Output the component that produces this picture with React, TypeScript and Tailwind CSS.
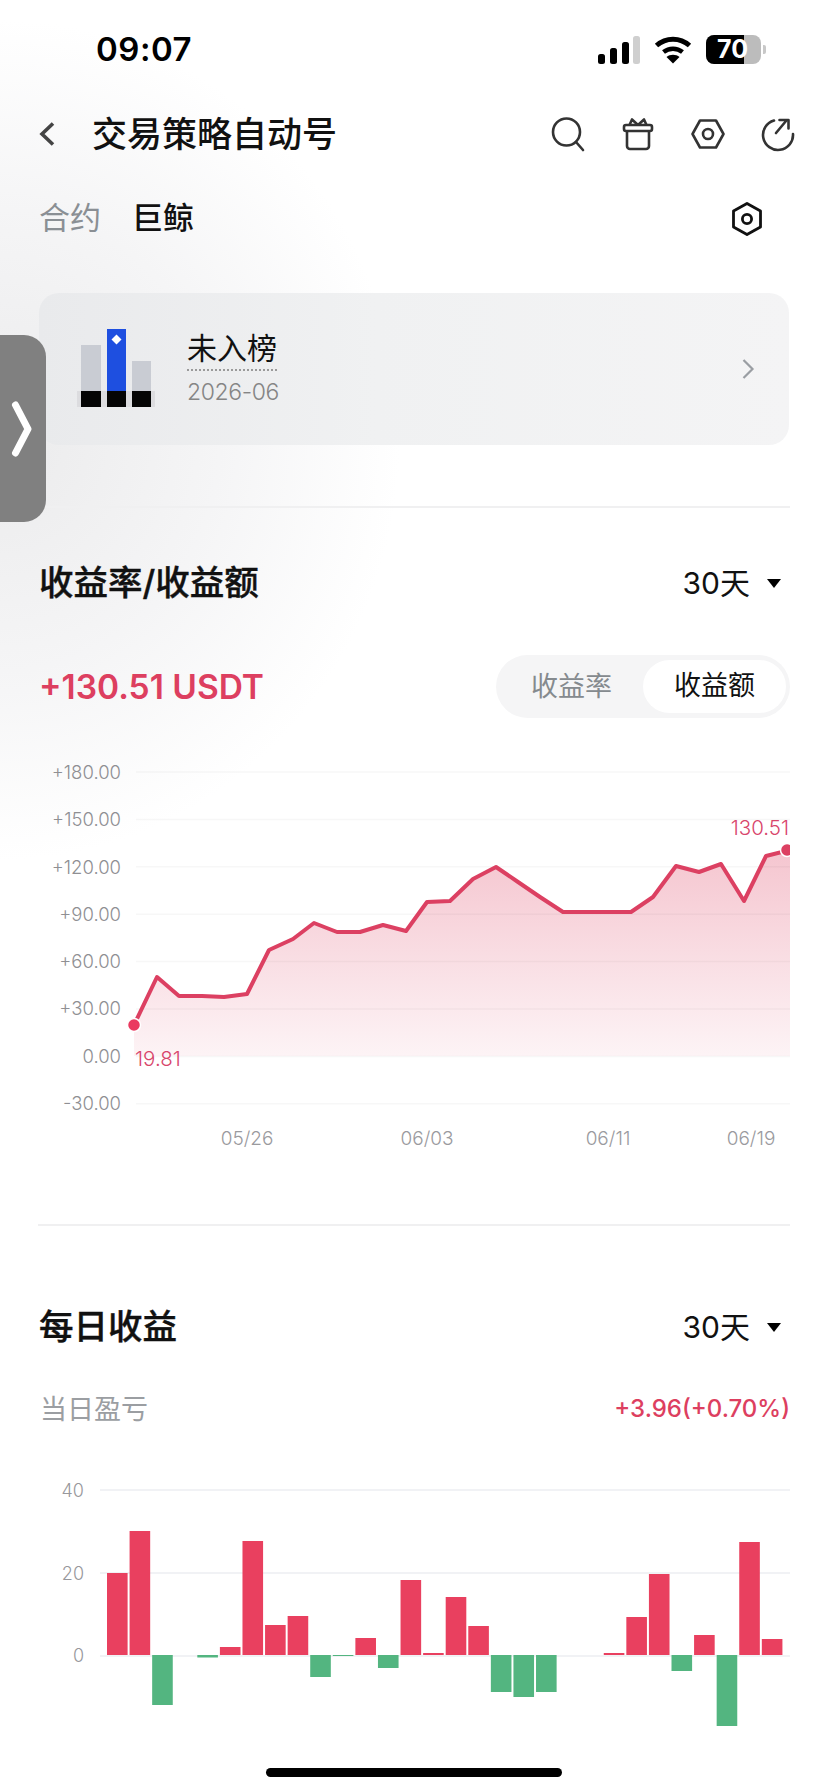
const FONT = "font-['Inter','Noto_Sans_CJK_SC',sans-serif]";

const LINE: [number, number][] = [
  [134, 1025], [157, 977], [179, 996], [202, 996], [224, 997], [247, 994], [269, 950], [293, 939],
  [314, 923], [337, 932], [360, 932], [383, 925], [406, 931], [427, 902], [450, 901], [473, 879],
  [496, 867], [518, 882], [540, 897], [563, 912], [586, 912], [608, 912], [631, 912], [653, 897],
  [676, 866], [699, 872], [721, 864], [744, 901], [766, 856], [790, 850],
];

const BARS = [
  82, 124, -50, 0, -2.5, 8, 114, 30, 39, -22, -1, 17, -13, 75, 2, 58, 29, -37, -42, -37, 0, 0, 2, 38, 81, -16, 20, -71, 113,
  16,
];

const Y_LABELS = ['+180.00', '+150.00', '+120.00', '+90.00', '+60.00', '+30.00', '0.00', '-30.00'];
const GRID_Y = [772, 819.4, 866.8, 914.2, 961.6, 1009, 1056.4, 1103.8];

function StatusBar() {
  return (
    <div className="flex h-[98px] items-center pl-[96px] pr-[62px] pt-[1px]">
      <span className="text-[33px] font-semibold tracking-[0.5px] text-black">09:07</span>
      <div className="ml-auto flex items-center">
        <svg width="44" height="28" viewBox="0 0 44 28">
          <rect x="1" y="18" width="7" height="10" rx="2.5" fill="#000" />
          <rect x="13" y="12" width="7" height="16" rx="2.5" fill="#000" />
          <rect x="25" y="6" width="7" height="22" rx="2.5" fill="#000" />
          <rect x="36" y="0" width="7" height="28" rx="2.5" fill="#cfcfcf" />
        </svg>
        <svg className="ml-[13px]" width="38" height="28" viewBox="0 0 38 28">
          <path d="M2.5 9.5 C 12 1 26 1 35.5 9.5" fill="none" stroke="#000" strokeWidth="5" />
          <path d="M9.5 16 C 15 11.5 23 11.5 28.5 16" fill="none" stroke="#000" strokeWidth="4.5" />
          <path d="M19 27.5 L12.5 21 C 16 18 22 18 25.5 21 Z" fill="#000" />
        </svg>
        <div className="relative ml-[14px] flex h-[29px] w-[55px] overflow-hidden rounded-[8px] bg-[#bcbcbc]">
          <div className="h-full w-[38px] bg-black" />
          <span className="absolute left-[11px] top-0 text-[25px] font-bold leading-[29px] text-white">70</span>
        </div>
        <div className="ml-[2px] h-[9px] w-[3px] rounded-r-[2px] bg-[#c8c8c8]" />
      </div>
    </div>
  );
}

function TopBar() {
  return (
    <div className="flex h-[70px] items-center pl-[38px] pr-[32px] pt-[2px]">
      <svg width="18" height="26" viewBox="0 0 18 26">
        <path d="M15 2.5 L4 13 L15 23.5" fill="none" stroke="#444" strokeWidth="3.6" />
      </svg>
      <h1 className="ml-[36px] text-[35px] font-medium leading-none text-[#111]">交易策略自动号</h1>
      <div className="ml-auto flex items-center gap-[34px] text-[#333]">
        <svg width="36" height="36" viewBox="0 0 36 36" fill="none" stroke="currentColor" strokeWidth="2.6">
          <circle cx="16.5" cy="16" r="13.5" />
          <path d="M26 26 L33 34" strokeLinecap="round" />
        </svg>
        <svg width="36" height="36" viewBox="0 0 36 36" fill="none" stroke="currentColor" strokeWidth="2.6" strokeLinejoin="round">
          <path d="M7 14 V30 a3 3 0 0 0 3 3 H26 a3 3 0 0 0 3 -3 V14" />
          <rect x="4" y="9" width="28" height="6" rx="2" />
          <path d="M18 9 L12 3.5 L9.5 9 M18 9 L24 3.5 L26.5 9" />
        </svg>
        <svg width="36" height="36" viewBox="0 0 36 36" fill="none" stroke="currentColor" strokeWidth="2.6" strokeLinejoin="round">
          <path d="M2.5 18 L10 4.5 H26 L33.5 18 L26 31.5 H10 Z" />
          <circle cx="18" cy="18" r="5" />
        </svg>
        <svg width="36" height="36" viewBox="0 0 36 36" fill="none" stroke="currentColor" strokeWidth="2.6" strokeLinecap="round" strokeLinejoin="round">
          <path d="M14 4.5 A 15 15 0 1 0 33 18" />
          <path d="M16 17 L26 5 M19.5 4 H28.5 V12.5" />
        </svg>
      </div>
    </div>
  );
}

function RankCard() {
  return (
    <div className="mx-[39px] mt-[27px] flex h-[152px] items-center rounded-[20px] bg-[linear-gradient(90deg,#e9eaec,#f0f1f2_45%,#f4f4f5)] pl-[38px] pr-[34px]">
      <svg width="80" height="80" viewBox="0 0 80 80">
        <rect x="0" y="62" width="78" height="16" fill="#dcdcdf" />
        <rect x="4" y="16" width="20" height="46" fill="#c9ccd3" />
        <rect x="55" y="32" width="19" height="30" fill="#c9ccd3" />
        <rect x="30" y="0" width="19" height="62" fill="#1e4fe0" />
        <path d="M39.5 5.5 L44.5 10.5 L39.5 15.5 L34.5 10.5 Z" fill="#fff" />
        <rect x="4" y="62" width="20" height="16" fill="#050505" />
        <rect x="30" y="62" width="19" height="16" fill="#050505" />
        <rect x="55" y="62" width="19" height="16" fill="#050505" />
      </svg>
      <div className="ml-[30px] flex -translate-y-[1px] flex-col items-start">
        <span className="border-b-2 border-dotted border-[#9a9a9a] pb-[2px] text-[30px] leading-[38px] text-[#111]">未入榜</span>
        <span className="mt-[6px] text-[23px] font-light leading-[30px] tracking-[-0.4px] text-[#858585]">2026-06</span>
      </div>
      <svg className="ml-auto" width="14" height="22" viewBox="0 0 14 22">
        <path d="M2.5 2 L11.5 11 L2.5 20" fill="none" stroke="#9a9ea3" strokeWidth="2.2" />
      </svg>
    </div>
  );
}

function RangeSelect() {
  return (
    <div className="flex items-center">
      <span className="text-[30px] leading-none text-[#111]">30天</span>
      <span className="ml-[17px] mr-[9px] h-0 w-0 border-x-[7px] border-t-[9px] border-x-transparent border-t-black" />
    </div>
  );
}

function Divider({ className }: { className: string }) {
  return <div className={`mx-[38px] h-[2px] bg-[#f0f0f1] ${className}`} />;
}

function ProfitChart() {
  const pts = LINE.map(([x, y]) => `${x},${y}`).join(' ');
  return (
    <div>
      <div className="mt-[42px] flex h-[63px] items-center pl-[39px] pr-[38px]">
        <span className="translate-y-[1px] text-[33.5px] font-semibold leading-none text-[#dd3f60]">+130.51 USDT</span>
        <div className="ml-auto flex h-[63px] w-[294px] items-center rounded-full bg-[#f5f5f6] pl-[35px] pr-[4px]">
          <span className="text-[27px] leading-none text-[#858a8e]">收益率</span>
          <span className="ml-auto flex h-[53px] w-[143px] items-center justify-center rounded-full bg-white text-[27px] text-[#111]">
            收益额
          </span>
        </div>
      </div>

      <div className="relative mt-[42px] flex h-[355px] pl-[40px]">
        <div className="flex w-[81px] flex-col justify-between text-right text-[18.5px] font-light leading-[24px] text-[#8f8f93]">
          {Y_LABELS.map((l) => (
            <span key={l}>{l}</span>
          ))}
        </div>
        <svg className="ml-[5px]" width="664" height="355" viewBox="126 760 664 355">
          <defs>
            <linearGradient id="area" x1="0" y1="0" x2="0" y2="1">
              <stop offset="0" stopColor="#dd3f60" stopOpacity="0.3" />
              <stop offset="1" stopColor="#dd3f60" stopOpacity="0.06" />
            </linearGradient>
          </defs>
          <polygon points={`134,1056 ${pts} 790,1056`} fill="url(#area)" />
          {GRID_Y.map((y) => (
            <line key={y} x1="136" x2="790" y1={y} y2={y} stroke="#000" strokeOpacity="0.03" strokeWidth="1.5" />
          ))}
          <polyline points={pts} fill="none" stroke="#dc4062" strokeWidth="4" strokeLinejoin="round" />
          <circle cx="134" cy="1025" r="6.5" fill="#ea3a60" stroke="#fff" strokeWidth="1.5" />
          <circle cx="787" cy="850" r="6.5" fill="#dc4062" stroke="#fff" strokeWidth="1.5" />
        </svg>
        <span className="absolute left-[135px] top-[287px] text-[20.5px] font-light leading-[24px] text-[#d8456b]">19.81</span>
        <span className="absolute right-[39px] top-[56px] text-[20.5px] font-light leading-[24px] text-[#d8456b]">130.51</span>
      </div>

      <div className="ml-[197px] mt-[12px] flex h-[24px] text-[19px] font-light leading-[24px] text-[#9a9a9e]">
        <span className="w-[100px] text-center">05/26</span>
        <span className="ml-[80px] w-[100px] text-center">06/03</span>
        <span className="ml-[81px] w-[100px] text-center">06/11</span>
        <span className="ml-[43px] w-[100px] text-center">06/19</span>
      </div>
    </div>
  );
}

function DailyChart() {
  return (
    <div className="mt-[50px] flex h-[251px] pl-[40px]">
      <div className="flex h-[189px] w-[44px] flex-col justify-between text-right text-[18px] font-light leading-[24px] text-[#98989c]">
        <span>40</span>
        <span>20</span>
        <span>0</span>
      </div>
      <svg className="ml-[16px]" width="690" height="251" viewBox="100 1479 690 251">
        {[1490, 1573, 1656].map((y) => (
          <line key={y} x1="100" x2="790" y1={y} y2={y} stroke="#f1f2f5" strokeWidth="2" />
        ))}
        {BARS.map((v, i) => {
          const x = 107 + i * 22.58;
          if (v === 0) return null;
          return v > 0 ? (
            <rect key={i} x={x} y={1655 - v} width="20.6" height={v} fill="#e9405f" />
          ) : (
            <rect key={i} x={x} y={1655} width="20.6" height={-v} fill="#53b580" />
          );
        })}
      </svg>
    </div>
  );
}

export default function App() {
  return (
    <div
      className={`relative h-[1792px] w-[828px] overflow-hidden bg-white bg-[radial-gradient(ellipse_400px_420px_at_0px_440px,#ebebec_0%,#f5f5f6_55%,#ffffff_100%)] ${FONT}`}>
      <StatusBar />
      <TopBar />

      <div className="flex h-[98px] items-center pl-[39px] pr-[63px]">
        <span className="text-[31px] leading-none text-[#8a8f94]">合约</span>
        <span className="ml-[31px] text-[31px] font-medium leading-none text-[#111]">巨鲸</span>
        <svg className="ml-auto translate-y-[2px]" width="36" height="36" viewBox="0 0 36 36" fill="none" stroke="#111" strokeWidth="2.8" strokeLinejoin="round">
          <path d="M18 2.5 L31.5 10 V26 L18 33.5 L4.5 26 V10 Z" />
          <circle cx="18" cy="18" r="4.6" />
        </svg>
      </div>

      <RankCard />
      <Divider className="mt-[61px]" />

      <div className="mt-[45px] flex h-[60px] items-center pl-[39px] pr-[38px]">
        <h2 className="text-[34.5px] font-medium leading-none text-[#111] [-webkit-text-stroke:0.4px_#111]">收益率/收益额</h2>
        <div className="ml-auto">
          <RangeSelect />
        </div>
      </div>

      <ProfitChart />

      <Divider className="mt-[73px]" />

      <div className="mt-[71px] flex h-[60px] items-center pl-[39px] pr-[38px]">
        <h2 className="text-[34.5px] font-medium leading-none text-[#111] [-webkit-text-stroke:0.4px_#111]">每日收益</h2>
        <div className="ml-auto">
          <RangeSelect />
        </div>
      </div>

      <div className="mt-[32px] flex h-[40px] items-center pl-[40px] pr-[38px]">
        <span className="text-[27px] leading-none text-[#9b9ea2]">当日盈亏</span>
        <span className="ml-auto text-[24px] font-medium leading-none text-[#dd3f60]">+3.96(+0.70%)</span>
      </div>

      <DailyChart />

      <div className="mx-auto mt-[38px] h-[9px] w-[296px] rounded-full bg-black" />

      <div className="absolute left-0 top-[335px] flex h-[187px] w-[46px] items-center justify-center rounded-r-[22px] bg-[#808080]">
        <svg className="-translate-x-[1px]" width="22" height="56" viewBox="0 0 22 56">
          <path d="M4.5 4 L17 28 L4.5 52" fill="none" stroke="#fff" strokeWidth="7" strokeLinecap="round" strokeLinejoin="round" />
        </svg>
      </div>
    </div>
  );
}
